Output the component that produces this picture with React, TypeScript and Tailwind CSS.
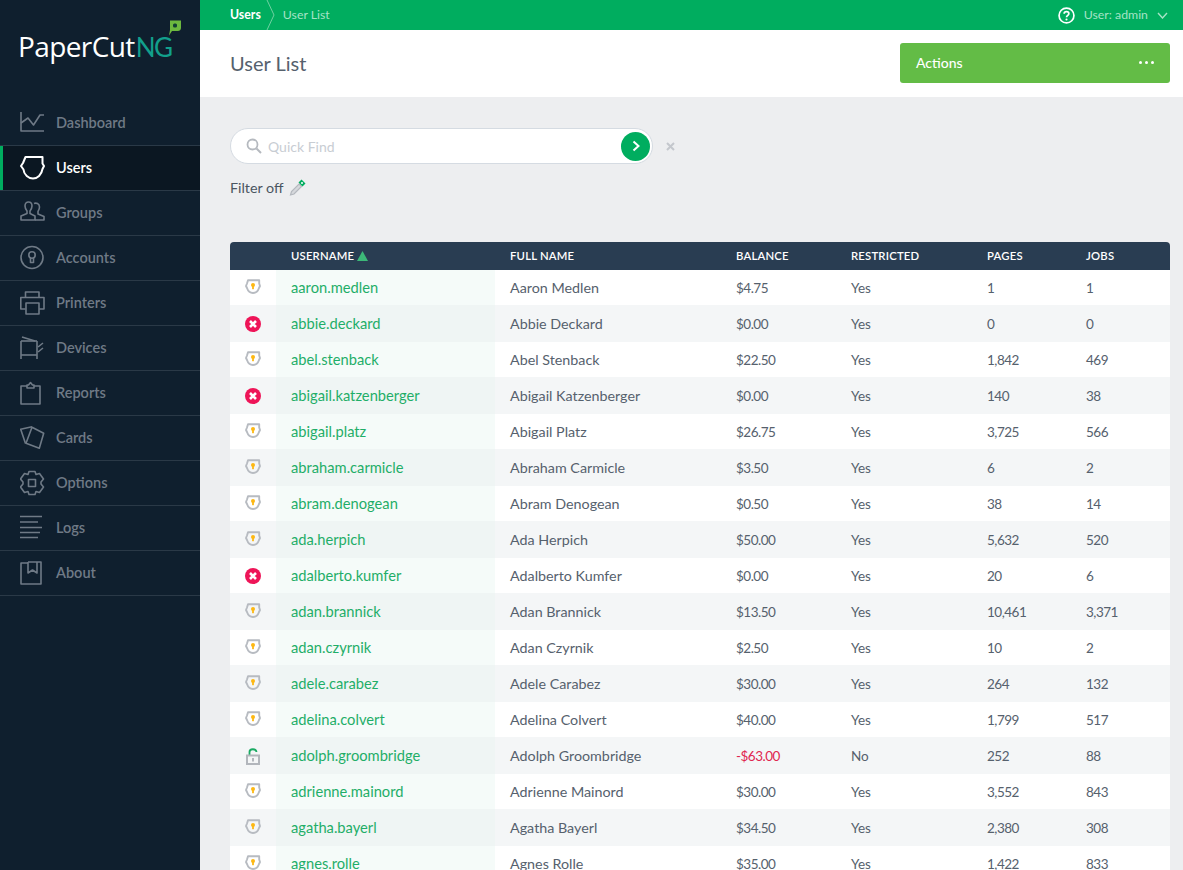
import React from "react";

const ff = "font-['Lato','Liberation_Sans',sans-serif]";

type S = "k" | "x" | "o";
const rows: [S, string, string, string, string, string, string][] = [
  ["k", "aaron.medlen", "Aaron Medlen", "$4.75", "Yes", "1", "1"],
  ["x", "abbie.deckard", "Abbie Deckard", "$0.00", "Yes", "0", "0"],
  ["k", "abel.stenback", "Abel Stenback", "$22.50", "Yes", "1,842", "469"],
  ["x", "abigail.katzenberger", "Abigail Katzenberger", "$0.00", "Yes", "140", "38"],
  ["k", "abigail.platz", "Abigail Platz", "$26.75", "Yes", "3,725", "566"],
  ["k", "abraham.carmicle", "Abraham Carmicle", "$3.50", "Yes", "6", "2"],
  ["k", "abram.denogean", "Abram Denogean", "$0.50", "Yes", "38", "14"],
  ["k", "ada.herpich", "Ada Herpich", "$50.00", "Yes", "5,632", "520"],
  ["x", "adalberto.kumfer", "Adalberto Kumfer", "$0.00", "Yes", "20", "6"],
  ["k", "adan.brannick", "Adan Brannick", "$13.50", "Yes", "10,461", "3,371"],
  ["k", "adan.czyrnik", "Adan Czyrnik", "$2.50", "Yes", "10", "2"],
  ["k", "adele.carabez", "Adele Carabez", "$30.00", "Yes", "264", "132"],
  ["k", "adelina.colvert", "Adelina Colvert", "$40.00", "Yes", "1,799", "517"],
  ["o", "adolph.groombridge", "Adolph Groombridge", "-$63.00", "No", "252", "88"],
  ["k", "adrienne.mainord", "Adrienne Mainord", "$30.00", "Yes", "3,552", "843"],
  ["k", "agatha.bayerl", "Agatha Bayerl", "$34.50", "Yes", "2,380", "308"],
  ["k", "agnes.rolle", "Agnes Rolle", "$35.00", "Yes", "1,422", "833"],
];

const Ico = ({ children }: { children: React.ReactNode }) => (
  <svg width={26} height={26} viewBox="0 0 26 26" fill="none" stroke="currentColor" strokeWidth={1.6} strokeLinejoin="round">
    {children}
  </svg>
);

const nav: [string, React.ReactNode][] = [
  ["Dashboard", <><path d="M1 2V21H24" /><path d="M1 13L8 8L13.5 15L20 5H24" /></>],
  ["Users", <path strokeWidth={2} d="M5.5 2H22.5V8.5L24 11L22.5 14C21.5 20 17.5 23.5 13 23.5C8.5 23.5 4 20 3.5 14.5L1 11L3 8Z" />],
  ["Groups", <><path d="M1 20V16L7 13.5V11C5.5 9 5 7.5 5 6C5 3.5 6.5 2 8.5 2C10.5 2 12 3.5 12 6C12 7.5 11.5 9 10 11V13.5L15 16V20Z" /><path d="M14 3.5C16 2.5 19.5 3.5 19.5 7C19.5 8.5 19 10 18 11.5V14L24 16.5V20H15" /></>],
  ["Accounts", <><circle cx="12" cy="12.5" r="11" /><circle cx="12" cy="10" r="3.2" /><path d="M10.5 13V17.5H13.5V13" /></>],
  ["Printers", <><path d="M5.5 7V2H19V7" /><path d="M5.5 19H0.8V7.5H24V19H19" /><path d="M6 13H19V24H6Z" /></>],
  ["Devices", <><path d="M2 2L15 6" /><path d="M1 6V24" /><path d="M17 6V24" /><path d="M1 6H17" /><path d="M1 20H17" /><path d="M18 12L23 8M18 17L23 13" /></>],
  ["Reports", <><path d="M7 6H1V24H20V6H14" /><path d="M7 8V5H8.5L10.5 2.5L12.5 5H14V8Z" /></>],
  ["Cards", <><path d="M5.5 18.5L0.7 4.3L12 1.7" /><path d="M12 2.3L23.7 8.3L19.3 23.3L6 18.3Z" /></>],
  ["Options", <><path d="M9 1.5H15L16 4.5L19.5 3.5L23.5 9L21 12V14L23.5 17L19.5 22.5L16 21.5L15 24.5H9L8 21.5L4.5 22.5L0.5 17L3 14V12L0.5 9L4.5 3.5L8 4.5Z" /><rect x="8.5" y="9.5" width="7" height="7" /></>],
  ["Logs", <path d="M0 1.5H22M0 7H18M0 12.5H22M0 17.5H20M0 22.5H18" />],
  ["About", <><path d="M8 3H1V24H21V2H8" /><path d="M8 2V13L12.5 10L17 13V2" /></>],
];

const StatusIcon = ({ s }: { s: S }) => {
  if (s === "x")
    return (
      <svg width="16" height="16" viewBox="0 0 16 16">
        <circle cx="8" cy="8" r="8" fill="#ee1558" />
        <path d="M5 5L11 11M11 5L5 11" stroke="#fff" strokeWidth="2.6" />
      </svg>
    );
  if (s === "o")
    return (
      <svg className="translate-y-[1px]" width="14" height="17" viewBox="0 0 14 17" fill="none">
        <path d="M3.5 7V4C3.5 0.5 10 0.2 10.5 4" stroke="#1aaa63" strokeWidth="1.8" />
        <rect x="1" y="7.5" width="12" height="8.5" stroke="#b2b6bc" strokeWidth="2" />
        <rect x="6" y="10" width="2" height="3.5" fill="#b2b6bc" />
      </svg>
    );
  return (
    <svg className="-translate-y-[1px]" width="16" height="15" viewBox="0 0 16 15" fill="none">
      <path d="M3 1.2H14.2V4.5L15 7L14 9C13 12 11 14 8 14C5 14 3 12 2 9L1 7L2 4.5Z" stroke="#b7bbc1" strokeWidth="1.9" strokeLinejoin="round" />
      <circle cx="8" cy="6" r="2" fill="#fdb813" />
      <rect x="7.1" y="6.5" width="1.8" height="3.7" fill="#fdb813" />
    </svg>
  );
};

const num = "p-0 pt-[1px] text-[13.5px] tracking-[-0.5px]";

export default function App() {
  return (
    <div className={`flex h-screen w-full overflow-hidden bg-[#edeef0] ${ff}`}>
      <aside className="w-[200px] shrink-0 bg-[#0f1f2e]">
        <div className="relative h-[101px]">
          <div className="absolute left-[18px] top-[28px] flex items-baseline leading-[36px] text-white">
            <span className="font-['Open_Sans',sans-serif] text-[28px] font-medium tracking-[-0.6px]">PaperCut</span>
            <span className="ml-[1px] text-[26px] tracking-[-1.5px] text-[#12a08c]">NG</span>
          </div>
          <svg className="absolute left-[168px] top-[20px]" width="14" height="16" viewBox="0 0 14 16">
            <path d="M2 0.5H13V8C13 10 11.5 11 10 11H4L1 15.5L2 10Z" fill="#6cb83f" />
            <rect x="5" y="3.5" width="4" height="4" rx="1.5" fill="#123f34" />
          </svg>
        </div>
        <nav>
          {nav.map(([label, icon]) => {
            const active = label === "Users";
            return (
              <div
                key={label}
                className={`relative flex h-[45px] items-center gap-[10px] border-b border-[#2a3947] pl-5 text-[14.5px] font-semibold ${active ? "bg-[#0b1722] text-white" : "text-[#6f7a86]"}`}
              >
                {active && <span className="absolute left-0 top-0 h-full w-[3px] bg-[#00ad5f]" />}
                <span className="flex w-[26px] shrink-0 items-center justify-center">
                  <Ico>{icon}</Ico>
                </span>
                <span>{label}</span>
              </div>
            );
          })}
        </nav>
      </aside>
      <main className="min-w-0 flex-1">
        <div className="flex h-[30px] items-center bg-[#00ad5f] pl-[30px] pr-[15px] text-[12.3px]">
          <span className="font-bold text-white">Users</span>
          <svg className="ml-[5px]" width="10" height="30" viewBox="0 0 10 30" fill="none">
            <path d="M1 0L8 15L1 30" stroke="#6fd0a2" />
          </svg>
          <span className="ml-[7px] text-[#a5e3c6]">User List</span>
          <div className="ml-auto flex items-center">
            <svg width="17" height="17" viewBox="0 0 16 16" fill="none">
              <circle cx="8" cy="8" r="7" stroke="#fff" strokeWidth="1.6" />
              <path d="M5.8 6.3C5.8 3.8 10.2 3.8 10.2 6.3C10.2 7.9 8 7.9 8 9.7" stroke="#fff" strokeWidth="1.6" />
              <circle cx="8" cy="11.8" r="1" fill="#fff" />
            </svg>
            <span className="ml-[9px] text-[#a5e3c6]">User: admin</span>
            <svg className="ml-[9px]" width="11" height="7" viewBox="0 0 11 7" fill="none">
              <path d="M1 1L5.5 6L10 1" stroke="#a5e3c6" strokeWidth="1.4" />
            </svg>
          </div>
        </div>
        <div className="flex h-[67px] items-center justify-between bg-white pl-[30px] pr-[13px]">
          <h1 className="-translate-y-[1px] text-[20px] text-[#56616d]">User List</h1>
          <button className="mb-[2px] flex h-[40px] w-[270px] items-center justify-between rounded-[3px] bg-[#63bc46] pl-4 pr-4 text-[14px] font-medium text-white">
            <span>Actions</span>
            <span className="flex gap-[3px]">
              <i className="h-[3px] w-[3px] rounded-full bg-white" />
              <i className="h-[3px] w-[3px] rounded-full bg-white" />
              <i className="h-[3px] w-[3px] rounded-full bg-white" />
            </span>
          </button>
        </div>
        <div className="pl-[30px] pr-[13px]">
          <div className="mt-[31px] flex items-center">
            <div className="flex h-[36px] w-[423px] items-center rounded-full border border-[#d5dbe2] bg-white pl-[15px] pr-[2px]">
              <svg width="16" height="16" viewBox="0 0 16 16" fill="none">
                <circle cx="6.5" cy="6.5" r="5" stroke="#b5b9bf" strokeWidth="1.8" />
                <path d="M10.5 10.5L15 15" stroke="#b5b9bf" strokeWidth="2" />
              </svg>
              <span className="ml-[6px] text-[14px] text-[#c8cdd3]">Quick Find</span>
              <span className="ml-auto flex h-[29px] w-[29px] items-center justify-center rounded-full bg-[#00ad5f]">
                <svg width="10" height="12" viewBox="0 0 10 12" fill="none">
                  <path d="M2.5 1.5L7.5 6L2.5 10.5" stroke="#fff" strokeWidth="2" />
                </svg>
              </span>
            </div>
            <svg className="ml-[13px]" width="9" height="9" viewBox="0 0 9 9" fill="none">
              <path d="M1 1L8 8M8 1L1 8" stroke="#c4c7cd" strokeWidth="2" />
            </svg>
          </div>
          <div className="mt-[13px] flex items-center text-[14.3px] leading-[22px] text-[#4a5561]">
            <span>Filter off</span>
            <svg className="ml-[5px] -translate-y-[1px]" width="17" height="17" viewBox="0 0 17 17" fill="none">
              <path d="M10 5L12.5 7.5L5 15L1.5 16L2.5 12.5Z" stroke="#b4b8be" strokeWidth="1.2" fill="#d6d8dc" />
              <path d="M12.5 0.5L16.5 4.5L13.5 7.5L9.5 3.5Z" fill="#00ad5f" />
              <circle cx="13" cy="4" r="1" fill="#fff" />
            </svg>
          </div>
          <table className="mt-[43px] w-[940px] table-fixed border-collapse text-[14.3px] text-[#56616d]">
            <colgroup>
              <col className="w-[46px]" />
              <col className="w-[219px]" />
              <col className="w-[241px]" />
              <col className="w-[115px]" />
              <col className="w-[136px]" />
              <col className="w-[99px]" />
              <col className="w-[84px]" />
            </colgroup>
            <thead>
              <tr className="h-[28px] text-left text-[11.3px] font-semibold tracking-[0.2px] text-white">
                <th className="rounded-tl-[4px] bg-[#293d52]" />
                <th className="bg-[#293d52] pl-[15px] font-semibold">
                  <span className="inline-flex items-center gap-[3px]">
                    USERNAME
                    <svg width="11" height="10" viewBox="0 0 11 10"><path d="M5.5 0L11 10H0Z" fill="#3cb878" /></svg>
                  </span>
                </th>
                <th className="bg-[#293d52] pl-[15px] font-semibold">FULL NAME</th>
                <th className="bg-[#293d52] font-semibold">BALANCE</th>
                <th className="bg-[#293d52] font-semibold">RESTRICTED</th>
                <th className="bg-[#293d52] font-semibold">PAGES</th>
                <th className="rounded-tr-[4px] bg-[#293d52] font-semibold">JOBS</th>
              </tr>
            </thead>
            <tbody>
              {rows.map((r, i) => {
                const even = i % 2 === 1;
                return (
                  <tr key={r[1]} className={even ? "h-[37px] bg-[#f4f6f7]" : "h-[35px] bg-white"}>
                    <td className="p-0">
                      <div className="flex justify-center">
                        <StatusIcon s={r[0]} />
                      </div>
                    </td>
                    <td className={`p-0 pl-[15px] text-[14.7px] text-[#1fae68] ${even ? "bg-[#eff5f4]" : "bg-[#f5fbf9]"}`}>{r[1]}</td>
                    <td className="p-0 pl-[15px]">{r[2]}</td>
                    <td className={`${num} ${r[3].startsWith("-") ? "text-[#e0264f]" : ""}`}>{r[3]}</td>
                    <td className="p-0 pt-[1px] text-[13.5px]">{r[4]}</td>
                    <td className={num}>{r[5]}</td>
                    <td className={num}>{r[6]}</td>
                  </tr>
                );
              })}
            </tbody>
          </table>
        </div>
      </main>
    </div>
  );
}
